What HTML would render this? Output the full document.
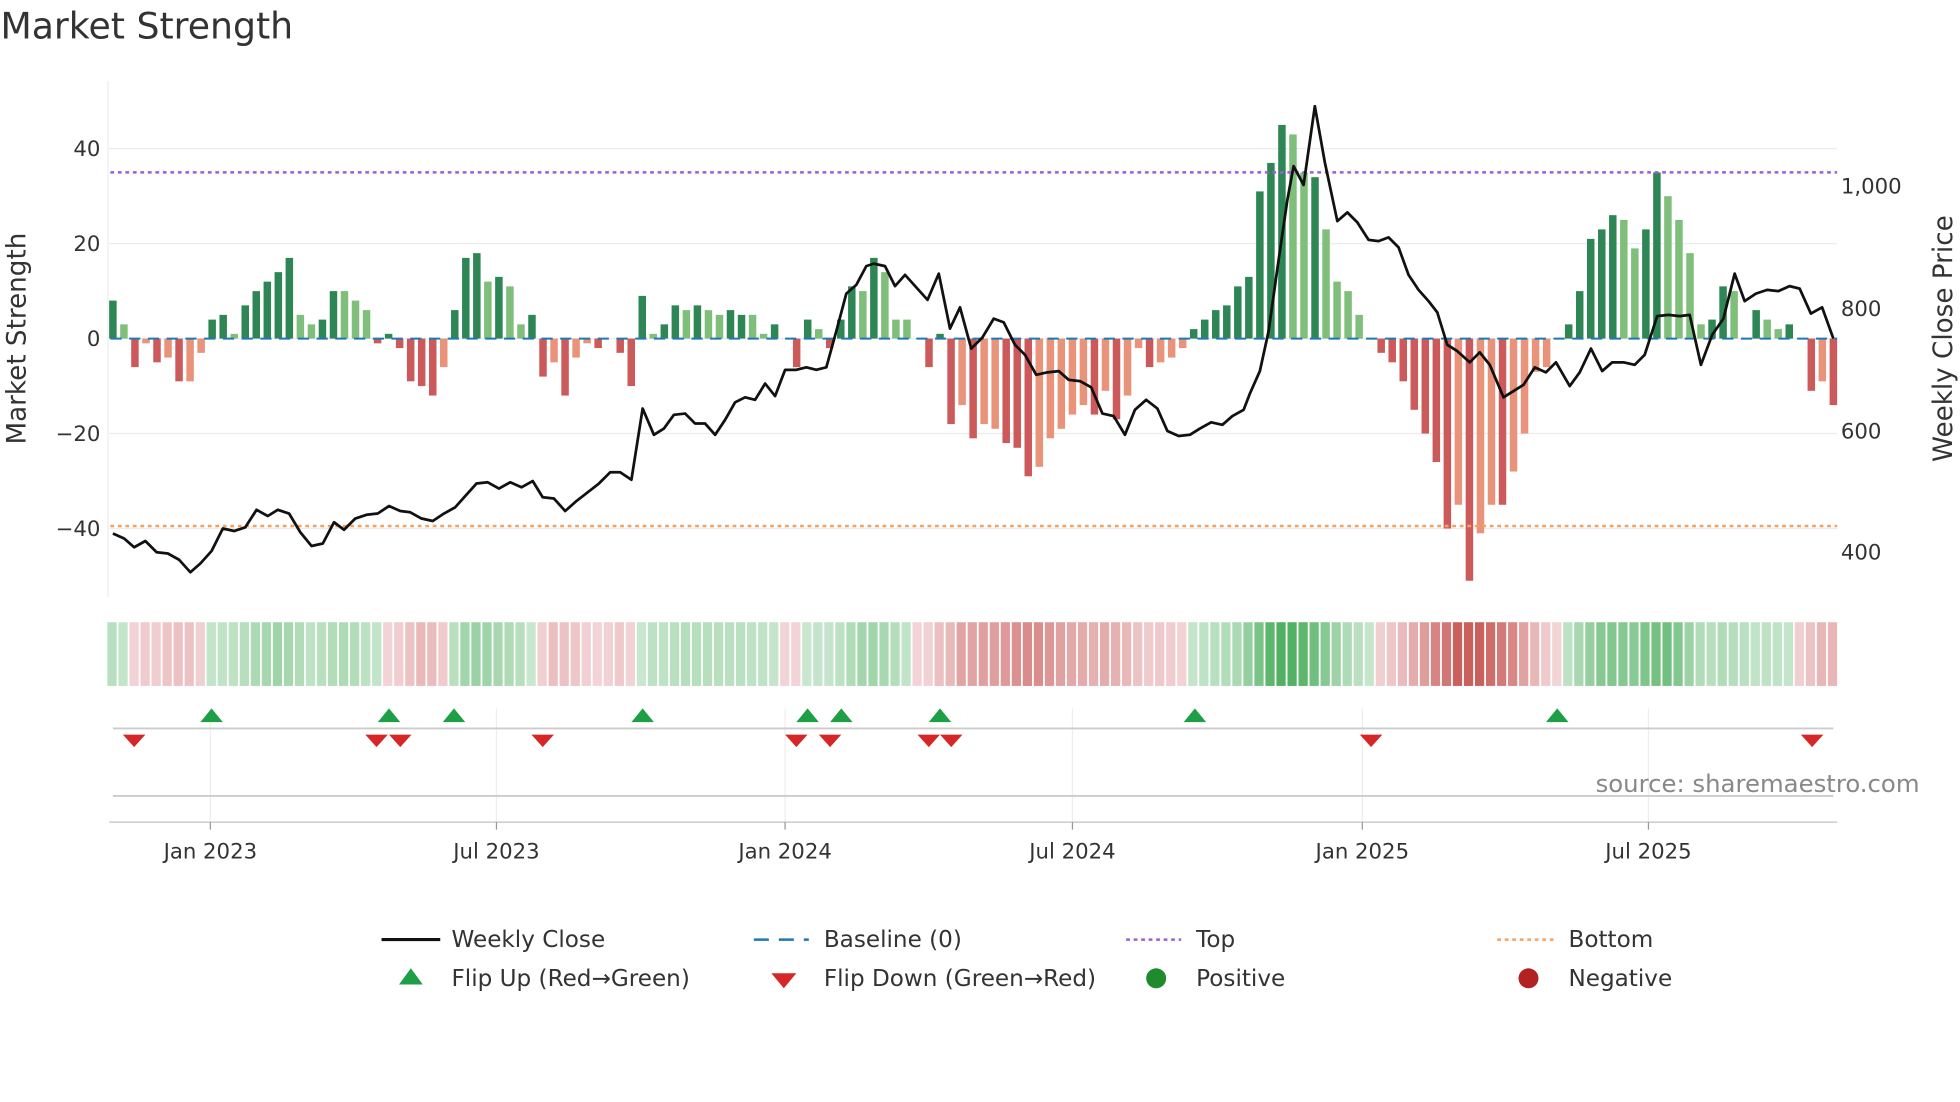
<!DOCTYPE html>
<html><head><meta charset="utf-8"><style>
html,body{margin:0;padding:0;background:#fff;}
svg{display:block;font-family:"DejaVu Sans","Liberation Sans",sans-serif;}
</style></head><body>
<svg id="s" width="1960" height="1102" viewBox="0 0 1568 882" xmlns="http://www.w3.org/2000/svg">
<rect width="1568" height="882" fill="#fff"/>
<text x="0" y="31" font-size="29" fill="#333">Market Strength</text>
<g id="grid"></g>
<g id="bars"></g>
<g id="lines"></g>
<g id="strip"></g>
<g id="marks"></g>
<g id="legend"></g>
</svg>
<script>
var NS="http://www.w3.org/2000/svg";
function el(p,t,a,txt){var e=document.createElementNS(NS,t);for(var k in a)e.setAttribute(k,a[k]);if(txt!=null)e.textContent=txt;document.getElementById(p).appendChild(e);return e;}
var Y0=271,K=3.8;
function yv(v){return Y0-v*K;}
[40,20,0,-20,-40].forEach(function(v){
 el('grid','line',{x1:87,x2:1470,y1:yv(v),y2:yv(v),stroke:'#ececec','stroke-width':1});
 el('grid','text',{x:80,y:yv(v)+6,'font-size':17,fill:'#333','text-anchor':'end'},(v<0?'\u2212'+(-v):v));
});
el('grid','line',{x1:86,x2:86,y1:65,y2:478,stroke:'#eee'});
[[1000,148],[800,246],[600,344],[400,441]].forEach(function(p){
 el('grid','text',{x:1473,y:p[1]+7,'font-size':17,fill:'#333'},p[0]==1000?'1,000':p[0]);
});
el('grid','text',{x:0,y:0,'font-size':21,fill:'#333','text-anchor':'middle',transform:'translate(20,271) rotate(-90)'},'Market Strength');
el('grid','text',{x:0,y:0,'font-size':21,fill:'#333','text-anchor':'middle',transform:'translate(1562,271) rotate(-90)'},'Weekly Close Price');
var B=[[8,1],[3,0],[-6,1],[-1,0],[-5,1],[-4,0],[-9,1],[-9,0],[-3,0],[4,1],[5,1],[1,0],[7,1],[10,1],[12,1],[14,1],[17,1],[5,0],[3,0],[4,1],[10,1],[10,0],[8,0],[6,0],[-1,1],[1,1],[-2,1],[-9,1],[-10,1],[-12,1],[-6,0],[6,1],[17,1],[18,1],[12,0],[13,1],[11,0],[3,0],[5,1],[-8,1],[-5,0],[-12,1],[-4,0],[-1,0],[-2,1],[0,0],[-3,1],[-10,1],[9,1],[1,0],[3,1],[7,1],[6,0],[7,1],[6,0],[5,0],[6,1],[5,1],[5,0],[1,0],[3,1],[0,0],[-6,1],[4,1],[2,0],[-2,1],[4,1],[11,1],[10,0],[17,1],[14,0],[4,0],[4,0],[0,0],[-6,1],[1,1],[-18,1],[-14,0],[-21,1],[-18,0],[-19,0],[-22,1],[-23,1],[-29,1],[-27,0],[-21,0],[-19,0],[-16,0],[-14,0],[-16,1],[-11,0],[-17,1],[-12,0],[-2,0],[-6,1],[-5,0],[-4,0],[-2,0],[2,1],[4,1],[6,1],[7,1],[11,1],[13,1],[31,1],[37,1],[45,1],[43,0],[35,0],[34,1],[23,0],[12,0],[10,0],[5,0],[0,0],[-3,1],[-5,1],[-9,1],[-15,1],[-20,1],[-26,1],[-40,1],[-35,0],[-51,1],[-41,0],[-35,0],[-35,1],[-28,0],[-20,0],[-7,0],[-6,0],[0,0],[3,1],[10,1],[21,1],[23,1],[26,1],[25,0],[19,0],[23,1],[35,1],[30,0],[25,0],[18,0],[3,0],[4,1],[11,1],[10,0],[0,0],[6,1],[4,0],[2,0],[3,1],[0,0],[-11,1],[-9,0],[-14,1]];
var N=B.length,X0=90,DX=(1467-90)/(N-1);
B.forEach(function(b,i){
 var v=b[0];if(v==0)return;var x=X0+i*DX-3;
 var c=v>0?(b[1]?'#2e8655':'#7fbf7b'):(b[1]?'#cc5a5a':'#e8937a');
 var y1=yv(Math.max(v,0)),y2=yv(Math.min(v,0));
 el('bars','rect',{x:x,y:y1,width:6,height:y2-y1,fill:c});
});
el('lines','line',{x1:88,x2:1470,y1:271,y2:271,stroke:'#1f77b4','stroke-width':1.6,'stroke-dasharray':'9 6'});
el('lines','line',{x1:88,x2:1470,y1:138,y2:138,stroke:'#9a5fd6','stroke-width':2,'stroke-dasharray':'3 3'});
el('lines','line',{x1:88,x2:1470,y1:421,y2:421,stroke:'#f4a261','stroke-width':2,'stroke-dasharray':'3 3'});
var P="90,427 99,431 107,438 116,433 125,442 134,443 143,448 152,458 160,451 169,441 178,423 187,425 196,422 205,408 214,413 222,408 231,411 240,426 249,437 258,435 267,418 275,424 284,415 293,412 302,411 311,405 320,409 328,410 337,415 346,417 355,411 364,406 372,397 381,387 390,386 399,391 408,386 417,390 426,385 434,398 443,399 452,409 461,401 470,394 479,387 488,378 496,378 505,384 514,327 523,348 531,343 539,332 548,331 556,339 564,339 572,348 580,336 588,322 596,318 604,320 612,307 620,317 628,296 637,296 645,294 653,296 661,294 669,265 677,235 685,228 693,213 699,211 708,213 716,229 724,220 733,230 742,240 751,219 760,263 768,246 777,279 786,270 795,255 803,258 812,276 820,284 829,300 838,298 847,297 855,304 864,305 873,310 882,331 891,333 900,348 908,328 917,320 926,327 934,345 943,349 952,348 960,343 969,338 978,340 986,333 995,328 1000,315 1008,297 1015,265 1022,215 1030,160 1035,133 1043,148 1052,85 1060,130 1070,177 1078,170 1086,178 1095,192 1103,193 1111,190 1119,198 1127,220 1135,232 1143,241 1150,250 1158,276 1166,281 1176,290 1184,282 1192,292 1203,318 1211,313 1219,308 1228,294 1237,298 1245,290 1256,309 1264,298 1273,279 1282,297 1290,290 1299,290 1308,292 1316,284 1326,253 1335,252 1344,253 1352,252 1361,292 1370,268 1379,255 1388,219 1396,241 1405,235 1414,232 1423,233 1432,229 1440,231 1449,251 1458,246 1467,271";
el('lines','polyline',{points:P,fill:'none',stroke:'#111','stroke-width':2.2,'stroke-linejoin':'round'});
B.forEach(function(b,i){
 var s=0,n=0;for(var j=i-1;j<=i+1;j++){if(j>=0&&j<N){s+=B[j][0];n++;}}
 var v=s/n, t=Math.min(Math.abs(v)/42,1);
 var c;
 if(v>=0){c='rgb('+Math.round(200-t*120)+','+Math.round(231-t*55)+','+Math.round(206-t*110)+')';}
 else{c='rgb('+Math.round(243-t*42)+','+Math.round(214-t*118)+','+Math.round(217-t*125)+')';}
 el('strip','rect',{x:X0+i*DX-4.4,y:498,width:7.4,height:51,fill:c});
});
[168,397,628,858,1090,1319].forEach(function(x){el('marks','line',{x1:x,x2:x,y1:567,y2:658,stroke:'#eee'});});
el('marks','line',{x1:90,x2:1467,y1:583,y2:583,stroke:'#ccc','stroke-width':1.5});
el('marks','line',{x1:90,x2:1467,y1:637,y2:637,stroke:'#ccc','stroke-width':1.5});
el('marks','line',{x1:87,x2:1470,y1:658,y2:658,stroke:'#ccc','stroke-width':1.2});
[[168,'Jan 2023'],[397,'Jul 2023'],[628,'Jan 2024'],[858,'Jul 2024'],[1090,'Jan 2025'],[1319,'Jul 2025']].forEach(function(t){
 el('marks','line',{x1:t[0],x2:t[0],y1:658,y2:664,stroke:'#999'});
 el('marks','text',{x:t[0],y:687,'font-size':17,fill:'#333','text-anchor':'middle'},t[1]);
});
[169,311,363,514,646,673,752,956,1246].forEach(function(x){el('marks','polygon',{points:(x-9)+',578 '+(x+9)+',578 '+x+',567',fill:'#1e9e45'});});
[107,301,320,434,637,664,743,761,1097,1450].forEach(function(x){el('marks','polygon',{points:(x-9)+',588 '+(x+9)+',588 '+x+',598',fill:'#d62728'});});
el('marks','text',{x:1536,y:634,'font-size':19.5,fill:'#888','text-anchor':'end'},'source: sharemaestro.com');
function lt(x,y,s){el('legend','text',{x:x,y:y+6,'font-size':18.5,fill:'#333'},s);}
el('legend','line',{x1:305,x2:352,y1:752,y2:752,stroke:'#111','stroke-width':2.5});lt(361,752,'Weekly Close');
el('legend','line',{x1:603,x2:647,y1:752,y2:752,stroke:'#1f77b4','stroke-width':2,'stroke-dasharray':'12 8'});lt(659,752,'Baseline (0)');
el('legend','line',{x1:901,x2:945,y1:752,y2:752,stroke:'#9a5fd6','stroke-width':2,'stroke-dasharray':'3 3'});lt(957,752,'Top');
el('legend','line',{x1:1198,x2:1243,y1:752,y2:752,stroke:'#f4a261','stroke-width':2,'stroke-dasharray':'3 3'});lt(1255,752,'Bottom');
el('legend','polygon',{points:'319,788 338,788 328.5,775',fill:'#1e9e45'});lt(361,783,'Flip Up (Red\u2192Green)');
el('legend','polygon',{points:'617,779 637,779 627,791',fill:'#d62728'});lt(659,783,'Flip Down (Green\u2192Red)');
el('legend','circle',{cx:925,cy:783,r:8,fill:'#1f8a2e'});lt(957,783,'Positive');
el('legend','circle',{cx:1223,cy:783,r:8,fill:'#b22222'});lt(1255,783,'Negative');
</script>
</body></html>
